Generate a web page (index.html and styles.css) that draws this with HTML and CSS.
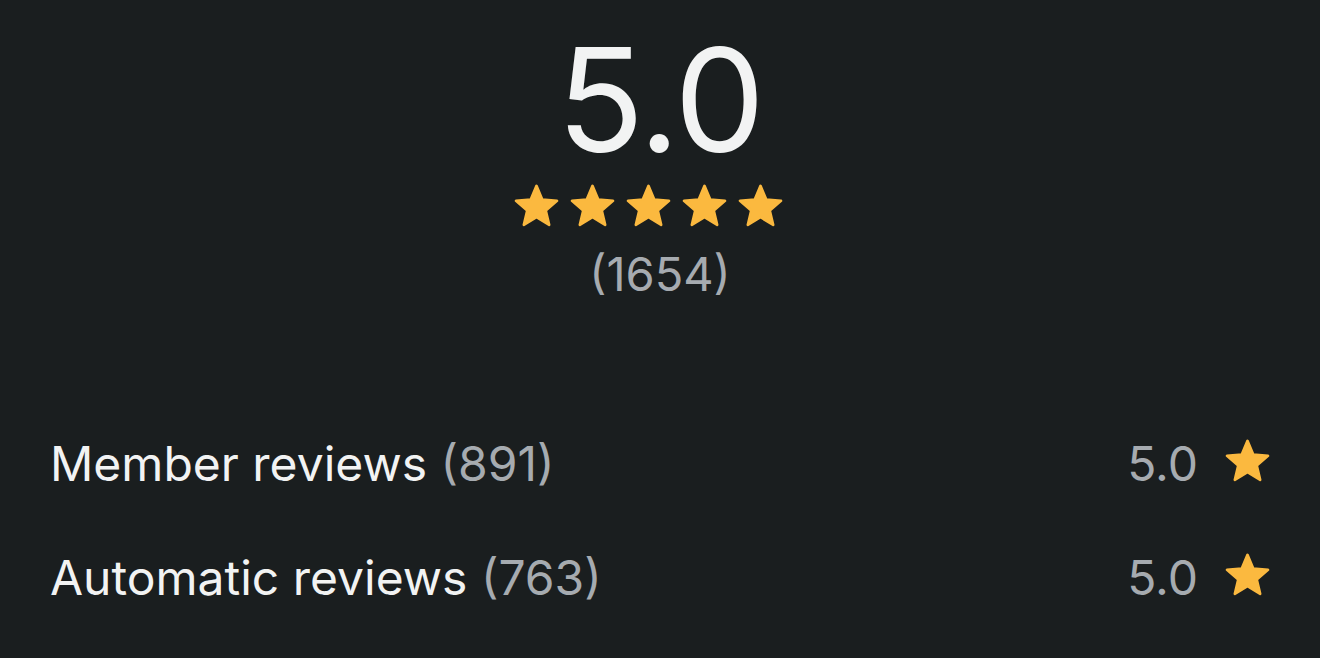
FILE: index.html
```html
<!DOCTYPE html>
<html lang="en">
<head>
    <meta charset="UTF-8">
    <meta name="viewport" content="width=device-width, initial-scale=1.0">
    <title>Reviews</title>
    <link rel="stylesheet" href="styles.css">
</head>
<body>
    <!-- overall rating -->
    <div class="summary">
        <div class="score">5.0</div>
        <div class="stars">
            <svg class="star" viewBox="0 0 24 24"><path d="M12 1l3.06 7.29 7.88.66-5.99 5.16 1.81 7.69L12 17.7l-6.76 4.1 1.81-7.69-5.99-5.16 7.88-.66z"/></svg>
            <svg class="star" viewBox="0 0 24 24"><path d="M12 1l3.06 7.29 7.88.66-5.99 5.16 1.81 7.69L12 17.7l-6.76 4.1 1.81-7.69-5.99-5.16 7.88-.66z"/></svg>
            <svg class="star" viewBox="0 0 24 24"><path d="M12 1l3.06 7.29 7.88.66-5.99 5.16 1.81 7.69L12 17.7l-6.76 4.1 1.81-7.69-5.99-5.16 7.88-.66z"/></svg>
            <svg class="star" viewBox="0 0 24 24"><path d="M12 1l3.06 7.29 7.88.66-5.99 5.16 1.81 7.69L12 17.7l-6.76 4.1 1.81-7.69-5.99-5.16 7.88-.66z"/></svg>
            <svg class="star" viewBox="0 0 24 24"><path d="M12 1l3.06 7.29 7.88.66-5.99 5.16 1.81 7.69L12 17.7l-6.76 4.1 1.81-7.69-5.99-5.16 7.88-.66z"/></svg>
        </div>
        <div class="total">(1654)</div>
    </div>

    <!-- breakdown -->
    <div class="rows">
        <div class="row">
            <span class="label">Member reviews <span class="count">(891)</span></span>
            <span class="value">5.0
                <svg class="star small" viewBox="0 0 24 24"><path d="M12 1l3.06 7.29 7.88.66-5.99 5.16 1.81 7.69L12 17.7l-6.76 4.1 1.81-7.69-5.99-5.16 7.88-.66z"/></svg>
            </span>
        </div>
        <div class="row">
            <span class="label">Automatic reviews <span class="count">(763)</span></span>
            <span class="value">5.0
                <svg class="star small" viewBox="0 0 24 24"><path d="M12 1l3.06 7.29 7.88.66-5.99 5.16 1.81 7.69L12 17.7l-6.76 4.1 1.81-7.69-5.99-5.16 7.88-.66z"/></svg>
            </span>
        </div>
    </div>
</body>
</html>
```

FILE: styles.css
```css
body {
    margin: 0;
    padding: 0;
    background-color: #1a1e1f;
    font-family: Inter, "Noto Sans", sans-serif;
    color: #f2f3f3;
}
.summary {
    display: flex;
    flex-direction: column;
    align-items: center;
    padding-top: 28px;
}
.score {
    font-size: 144px;
    line-height: 1;
    font-weight: 400;
    letter-spacing: -2px;
}
.stars {
    display: flex;
    gap: 11px;
    margin-top: 12px;
    margin-right: 24px;
}
.star {
    width: 45px;
    height: 45px;
    fill: #fbb93f;
    stroke: #fbb93f;
    stroke-width: 1.4;
    stroke-linejoin: round;
}
.total {
    font-size: 47px;
    line-height: 1;
    color: #a6abb0;
    margin-top: 21px;
}
.rows {
    padding: 0 50px;
    margin-top: 109px;
}
.row {
    display: flex;
    justify-content: space-between;
    align-items: center;
    font-size: 48px;
    height: 114px;
}
.count, .value {
    color: #a6abb0;
}
.value {
    display: flex;
    align-items: center;
    gap: 27px;
}
.star.small {
    width: 45px;
    height: 45px;
    margin-top: -4px;
}
```
